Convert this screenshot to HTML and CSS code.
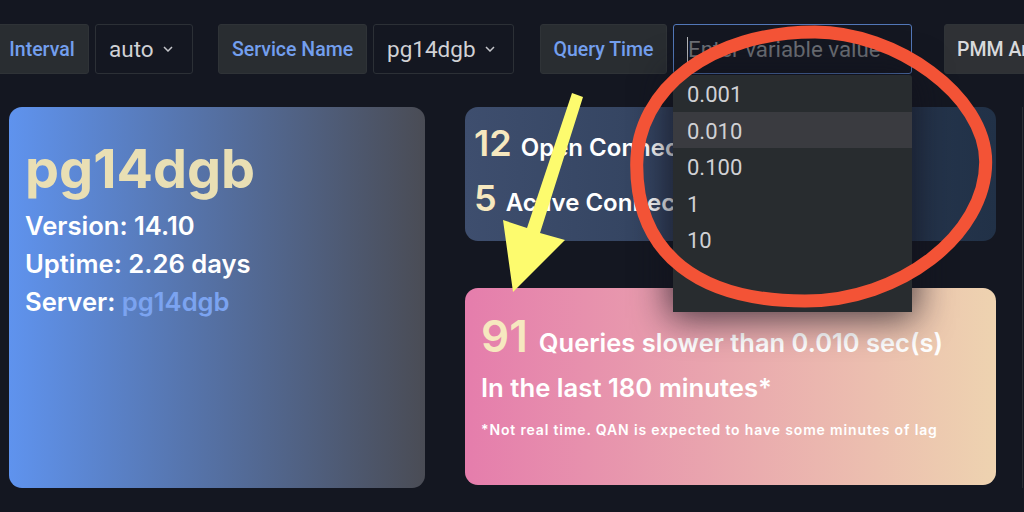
FILE: index.html
```html
<!DOCTYPE html>
<html lang="en">
<head>
<meta charset="UTF-8">
<meta name="viewport" content="width=device-width, initial-scale=1.0">
<title>PostgreSQL Dashboard</title>
<link rel="stylesheet" href="styles.css">
</head>
<body>
<div class="toolbar">
    <div class="var-group group-interval">
        <span class="var-label label-interval">Interval</span>
        <div class="var-select select-interval">auto
            <svg class="chevron" viewBox="0 0 10 6"><path d="M1 1l4 4 4-4"/></svg>
        </div>
    </div>
    <div class="var-group group-service">
        <span class="var-label label-service">Service Name</span>
        <div class="var-select select-service">pg14dgb
            <svg class="chevron" viewBox="0 0 10 6"><path d="M1 1l4 4 4-4"/></svg>
        </div>
    </div>
    <div class="var-group group-query">
        <span class="var-label label-query">Query Time</span>
        <div class="var-input">
            <span class="caret"></span><span class="placeholder">Enter variable value</span>
            <ul class="var-menu">
                <li>0.001</li>
                <li class="active">0.010</li>
                <li>0.100</li>
                <li>1</li>
                <li>10</li>
            </ul>
        </div>
    </div>
    <span class="var-label label-pmm">PMM Annotations</span>
</div>

<div class="panels">
    <section class="panel panel-server">
        <h1>pg14dgb</h1>
        <p class="server-line">Version: 14.10</p>
        <p class="server-line">Uptime: 2.26 days</p>
        <p class="server-line">Server: <span class="server-link">pg14dgb</span></p>
    </section>
    <div class="panel-column">
        <section class="panel panel-conn">
            <p class="stat-row"><b>12 </b>Open Connections</p>
            <p class="stat-row"><b>5 </b>Active Connections</p>
        </section>
        <section class="panel panel-slow">
            <p class="slow-row"><b>91 </b>Queries slower than 0.010 sec(s)</p>
            <p class="slow-range">In the last 180 minutes*</p>
            <p class="slow-note">*Not real time. QAN is expected to have some minutes of lag</p>
        </section>
    </div>
    <section class="panel-edge"></section>
</div>

<!-- annotations drawn on top of the screenshot -->
<svg class="markup" viewBox="0 0 1024 512">
    <path class="markup-circle" d="M636.7 165C636.7 88 712 32 815 32C895 32 985.7 95 985.7 162C985.7 235 900 301 805 301C700 301 636.7 255 636.7 165Z"/>
    <polygon class="markup-arrow" points="572,93 583,97 540,233 565,240 513,292 503,220 527,228"/>
</svg>
</body>
</html>
```

FILE: styles.css
```css
body {
    margin: 0;
    height: 512px;
    overflow: hidden;
    background-color: #141721;
    font-family: Roboto, "Liberation Sans", sans-serif;
    color: #d0d1d5;
}
p, h1, ul {
    margin: 0;
    padding: 0;
}
.toolbar {
    display: flex;
    padding-top: 24px;
    margin-left: -11px;
    height: 50px;
    width: 1035px;
    overflow: hidden;
    padding-bottom: 300px;
    margin-bottom: -300px;
    position: relative;
    z-index: 2;
}
.var-group {
    display: flex;
    gap: 6px;
}
.group-interval {
    margin-right: 25px;
}
.group-service {
    margin-right: 26px;
}
.group-query {
    margin-right: 32px;
}
.var-label {
    box-sizing: border-box;
    display: flex;
    align-items: center;
    justify-content: center;
    height: 50px;
    background-color: #292d31;
    border: 1px solid #2f3337;
    border-radius: 3px;
    font-size: 19.5px;
    font-weight: 500;
    color: #739fee;
    white-space: nowrap;
}
.label-interval {
    width: 100px;
    padding-left: 6px;
}
.label-service {
    width: 149px;
}
.label-query {
    width: 127px;
}
.label-pmm {
    flex: 0 0 180px;
    justify-content: flex-start;
    padding-left: 12px;
    color: #d8d9dc;
    background-color: #2f3135;
}
.var-select {
    box-sizing: border-box;
    display: flex;
    align-items: center;
    height: 50px;
    padding-left: 13px;
    border: 1px solid #2c3036;
    border-radius: 3px;
    font-size: 22.5px;
    background-color: #141721;
}
.select-interval {
    width: 98px;
}
.select-service {
    width: 141px;
}
.chevron {
    width: 10px;
    height: 6px;
    margin-left: 9px;
    fill: none;
    stroke: #c4c5ca;
    stroke-width: 1.5;
}
.var-input {
    box-sizing: border-box;
    position: relative;
    display: flex;
    align-items: center;
    width: 239px;
    height: 50px;
    padding-left: 13px;
    border: 1px solid #5277b8;
    border-radius: 3px;
    font-size: 22.3px;
    background-color: #141721;
}
.caret {
    width: 1px;
    height: 25px;
    margin-right: 0;
    background-color: #b5b6bb;
}
.placeholder {
    color: #6d7076;
}
.var-menu {
    position: absolute;
    top: 50px;
    left: -1px;
    width: 239px;
    height: 237px;
    list-style: none;
    font-size: 22px;
    background-color: #282c2f;
    border-radius: 3px 3px 0 0;
    box-shadow: 0 2px 36px 4px rgba(18, 18, 28, 0.75);
}
.var-menu li {
    height: 36.6px;
    line-height: 39px;
    padding-left: 14px;
}
.var-menu .active {
    background-color: #3a3b40;
}
.panels {
    display: flex;
    gap: 40px;
    padding: 33px 0 0 9px;
}
.panel {
    box-sizing: border-box;
    border-radius: 13px;
    font-family: Inter, "Liberation Sans", sans-serif;
    color: #fff;
}
.panel-server {
    flex: 0 0 416px;
    height: 381px;
    padding: 24px 16px 0;
    background: linear-gradient(90deg, #5f93ee, #4a4c55);
}
.panel-server h1 {
    font-size: 54px;
    line-height: 76px;
    font-weight: 700;
    color: #e9dfb4;
}
.server-line {
    font-size: 25.6px;
    font-weight: 600;
    line-height: 38px;
}
.server-link {
    color: #7ba3f0;
}
.panel-column {
    display: flex;
    flex-direction: column;
    gap: 47px;
    flex: 0 0 531px;
    margin-right: -14px;
}
.panel-conn {
    height: 134px;
    padding: 13px 9px 0;
    background: linear-gradient(90deg, #3e4e6e, #213147);
}
.stat-row {
    font-size: 24px;
    font-weight: 600;
    line-height: 55px;
    white-space: nowrap;
}
.stat-row b {
    font-size: 36px;
    line-height: 1;
    font-weight: 600;
    color: #f6e8bf;
}
.panel-slow {
    height: 197px;
    padding: 26px 16px 0;
    background: linear-gradient(90deg, #e57dac, #eed3b0);
}
.slow-row {
    font-size: 25.5px;
    font-weight: 600;
    line-height: 50px;
    white-space: nowrap;
}
.slow-row b {
    font-size: 44px;
    line-height: 1;
    font-weight: 600;
    color: #f6e8bf;
}
.slow-range {
    font-size: 25.7px;
    font-weight: 600;
    line-height: 39px;
}
.slow-note {
    margin-top: 14px;
    font-size: 14px;
    font-weight: 600;
    letter-spacing: 0.85px;
}
.panel-edge {
    flex: 0 0 40px;
    height: 381px;
    background-color: #141721;
    border-left: 1px solid #2a2d33;
}
.markup {
    position: absolute;
    top: 0;
    left: 0;
    width: 1024px;
    height: 512px;
    z-index: 3;
}
.markup-circle {
    fill: none;
    stroke: #f35336;
    stroke-width: 13;
}
.markup-arrow {
    fill: #fdfb6e;
}
```
